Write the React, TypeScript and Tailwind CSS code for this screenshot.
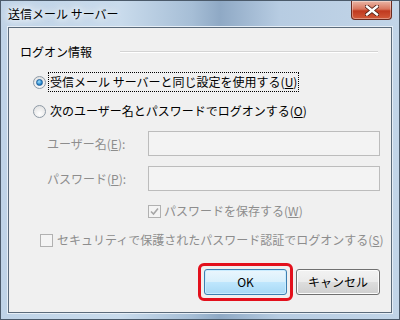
import React from "react";

const font = "font-['Noto_Sans_CJK_JP',sans-serif]";

const Radio = ({ checked }: { checked?: boolean }) => (
  <span className="flex h-[13px] w-[13px] shrink-0 items-center justify-center rounded-full border border-[#8e9aa6] bg-[radial-gradient(circle_at_50%_70%,#ffffff,#dcdcdc)]">
    {checked && (
      <span className="h-[7px] w-[7px] rounded-full border border-[#1f5f9a] bg-[radial-gradient(circle_at_40%_35%,#9fe1ff,#1a7bc4_70%)]" />
    )}
  </span>
);

const Checkbox = ({ checked }: { checked?: boolean }) => (
  <span className="flex h-[13px] w-[13px] shrink-0 items-center justify-center border border-[#b1b1b1] bg-[#f4f4f4]">
    {checked && (
      <svg width="9" height="9" viewBox="0 0 9 9">
        <path d="M1 4.5 L3.5 7 L8 1.5" fill="none" stroke="#a6a6a6" strokeWidth="1.6" />
      </svg>
    )}
  </span>
);

const Key = ({ k }: { k: string }) => (
  <>
    (<span className="underline">{k}</span>)
  </>
);

export default function App() {
  return (
    <div
      className={`${font} flex h-[320px] w-[400px] flex-col border border-[#4b5a6a] bg-[linear-gradient(90deg,#bfd3e7_0%,#c9dbec_30%,#a6bed6_48%,#8fa9c5_55%,#b7cce2_70%,#c2d5e8_100%)] text-[12px] leading-none text-black`}
    >
      {/* Title bar */}
      <div className="flex h-[26px] shrink-0 items-start justify-between">
        <div className="pl-[7px] pt-[7px] text-[12px] text-black [text-shadow:0_0_6px_#fff,0_0_10px_#fff,0_0_14px_#fff]">
          送信メール サーバー
        </div>
        <div className="mr-[7px] flex h-[19px] w-[41px] items-center justify-center rounded-b-[4px] border border-t-0 border-[#6b2a1f] bg-[linear-gradient(180deg,#eab6a6_0%,#d8755d_45%,#c0391f_55%,#d25a3a_100%)] shadow-[inset_0_0_0_1px_rgba(255,255,255,0.35)]">
          <svg width="14" height="11" viewBox="0 0 14 11">
            <path d="M2 1.5 L12 9.5 M12 1.5 L2 9.5" stroke="#4a1a12" strokeWidth="4" strokeLinecap="square" />
            <path d="M2 1.5 L12 9.5 M12 1.5 L2 9.5" stroke="#ffffff" strokeWidth="2.4" strokeLinecap="square" />
          </svg>
        </div>
      </div>

      {/* Content panel */}
      <div className="mx-[7px] mb-[6px] flex flex-1 flex-col border border-[#5b6b7b] bg-[#f0f0f0] shadow-[0_0_0_1px_#e6eef6]">
        <div className="mt-[16px] flex h-[16px] items-center pl-[11px] pr-[13px]">
          <span>ログオン情報</span>
          <span className="ml-[28px] h-[2px] flex-1 border-t border-b border-t-[#d4d4d4] border-b-white" />
        </div>

        <div className="mt-[12px] flex h-[20px] items-center pl-[24px]">
          <Radio checked />
          <span className="ml-[2px] flex h-[20px] items-center border border-dotted border-black px-[1px]">
            受信メール サーバーと同じ設定を使用する<Key k="U" />
          </span>
        </div>

        <div className="mt-[9px] flex h-[20px] items-center pl-[24px]">
          <Radio />
          <span className="ml-[4px]">
            次のユーザー名とパスワードでログオンする<Key k="O" />
          </span>
        </div>

        <div className="mt-[10px] flex h-[25px] items-center pl-[38px] pr-[11px] text-[#8d8d8d]">
          <span className="w-[101px]">
            ユーザー名<Key k="E" />:
          </span>
          <span className="h-[25px] flex-1 border border-[#bcbcbc] bg-[#f3f3f3]" />
        </div>

        <div className="mt-[10px] flex h-[25px] items-center pl-[38px] pr-[11px] text-[#8d8d8d]">
          <span className="w-[101px]">
            パスワード<Key k="P" />:
          </span>
          <span className="h-[25px] flex-1 border border-[#bcbcbc] bg-[#f3f3f3]" />
        </div>

        <div className="mt-[12px] flex h-[16px] items-center pl-[139px] text-[#8d8d8d]">
          <Checkbox checked />
          <span className="ml-[3px]">
            パスワードを保存する<Key k="W" />
          </span>
        </div>

        <div className="mt-[13px] flex h-[16px] items-center pl-[31px] text-[#8d8d8d]">
          <Checkbox />
          <span className="ml-[4px]">
            セキュリティで保護されたパスワード認証でログオンする<Key k="S" />
          </span>
        </div>

        <div className="mt-[15px] flex items-center justify-end pr-[11px]">
          <div className="rounded-[6px] border-[3px] border-[#e3101c] p-[3px]">
            <button className="flex h-[26px] w-[83px] items-center justify-center rounded-[3px] border border-[#3c7fb1] bg-[linear-gradient(180deg,#eaf6fd_0%,#d9f0fc_48%,#bee6fd_52%,#a7d9f5_100%)] text-[12px] shadow-[inset_0_0_0_1px_#c9ecff]">
              OK
            </button>
          </div>
          <button className="ml-[3px] flex h-[26px] w-[84px] items-center justify-center rounded-[3px] border border-[#707070] bg-[linear-gradient(180deg,#f2f2f2_0%,#ebebeb_48%,#dddddd_52%,#cfcfcf_100%)] text-[12px] shadow-[inset_0_0_0_1px_#fcfcfc]">
            キャンセル
          </button>
        </div>
      </div>
    </div>
  );
}
